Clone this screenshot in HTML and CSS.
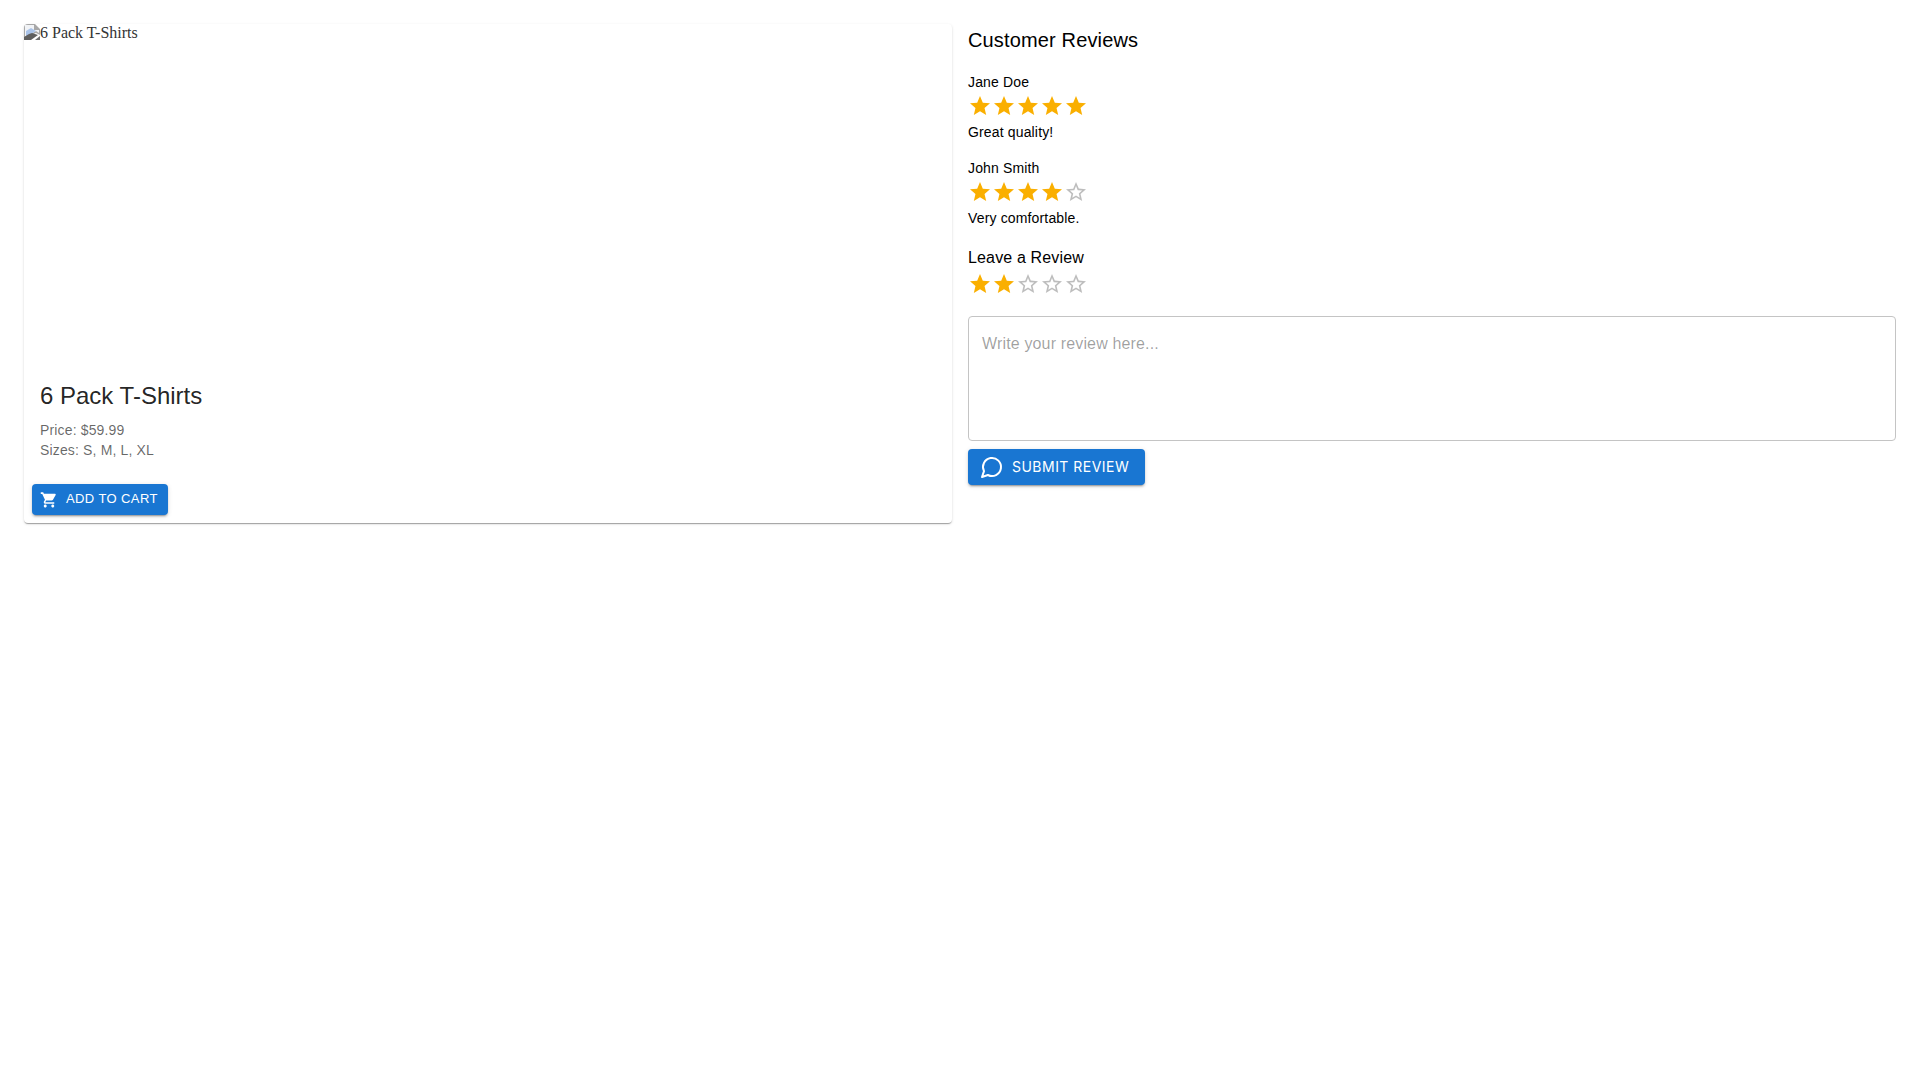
FILE: index.html
```html
<!DOCTYPE html>
<html lang="en">
<head>
<meta charset="utf-8">
<title>6 Pack T-Shirts</title>
<link rel="stylesheet" href="styles.css">
</head>
<body>
<svg class="defs" width="0" height="0" aria-hidden="true">
  <defs>
    <symbol id="star" viewBox="0 0 24 24"><path d="M12 17.27 18.18 21l-1.64-7.03L22 9.24l-7.19-.61L12 2 9.19 8.63 2 9.24l5.46 4.73L5.82 21z"/></symbol>
    <symbol id="star-o" viewBox="0 0 24 24"><path d="m22 9.24-7.19-.62L12 2 9.19 8.63 2 9.24l5.46 4.73L5.82 21 12 17.27 18.18 21l-1.63-7.03L22 9.24zM12 15.4l-3.76 2.27 1-4.28-3.32-2.88 4.38-.38L12 6.1l1.71 4.04 4.38.38-3.32 2.88 1 4.28L12 15.4z"/></symbol>
  </defs>
</svg>
<main class="page">
  <article class="card">
    <div class="media">
      <svg class="broken" viewBox="0 0 16 16" aria-hidden="true">
        <path d="M0 0h11l5 5v6l-4-2-5 2-7 3z" fill="#a8a8a8"/>
        <path d="M1 1h9v5h5v3l-3-2-5 3-6 3z" fill="#f1f3f6"/>
        <path d="M2 7l5-3 5 3-5 3-5 2z" fill="#aac4ea"/>
        <path d="M0 16v-3l5-3 3-1 6 2-7 5z" fill="#5f5f5f"/>
        <path d="M11 16l5-4v4z" fill="#707070"/>
      </svg><span class="alt">6 Pack T-Shirts</span>
    </div>
    <div class="content">
      <h2 class="title">6 Pack T-Shirts</h2>
      <p class="meta">Price: $59.99</p>
      <p class="meta">Sizes: S, M, L, XL</p>
    </div>
    <div class="actions">
      <button class="btn btn-small" type="button">
        <svg class="icon-cart" viewBox="0 0 24 24"><path d="M7 18c-1.100 0-1.990.9-1.990 2S5.900 22 7 22s2-.9 2-2-.9-2-2-2zM1 2v2h2l3.600 7.590-1.350 2.450c-.16.28-.25.61-.25.96 0 1.100.9 2 2 2h12v-2H7.420c-.14 0-.25-.11-.25-.25l.03-.12.9-1.830h7.450c.75 0 1.410-.41 1.750-1.030l3.580-6.490c.08-.14.12-.31.12-.48 0-.55-.45-1-1-1H5.210l-.94-2H1zm16 16c-1.100 0-1.990.9-1.990 2s.89 2 1.990 2 2-.9 2-2-.9-2-2-2z"/></svg>
        <span class="btn-label">Add to Cart</span>
      </button>
    </div>
  </article>

  <section class="reviews">
    <h2 class="reviews-title">Customer Reviews</h2>
    <div class="review">
      <p class="body">Jane Doe</p>
      <div class="rating">
        <svg class="star on"><use href="#star"/></svg><svg class="star on"><use href="#star"/></svg><svg class="star on"><use href="#star"/></svg><svg class="star on"><use href="#star"/></svg><svg class="star on"><use href="#star"/></svg>
      </div>
      <p class="body">Great quality!</p>
    </div>
    <div class="review">
      <p class="body">John Smith</p>
      <div class="rating">
        <svg class="star on"><use href="#star"/></svg><svg class="star on"><use href="#star"/></svg><svg class="star on"><use href="#star"/></svg><svg class="star on"><use href="#star"/></svg><svg class="star off"><use href="#star-o"/></svg>
      </div>
      <p class="body">Very comfortable.</p>
    </div>
    <h3 class="leave">Leave a Review</h3>
    <div class="rating rating-input">
      <svg class="star on"><use href="#star"/></svg><svg class="star on"><use href="#star"/></svg><svg class="star off"><use href="#star-o"/></svg><svg class="star off"><use href="#star-o"/></svg><svg class="star off"><use href="#star-o"/></svg>
    </div>
    <textarea class="field" placeholder="Write your review here..."></textarea>
    <button class="btn btn-medium" type="button">
      <svg class="icon-chat" viewBox="0 0 24 24"><path d="M7.900 20A9 9 0 1 0 4 16.100L2 22Z"/></svg>
      Submit Review
    </button>
  </section>
</main>
</body>
</html>
```

FILE: styles.css
```css
* { box-sizing: border-box; }
html, body { margin: 0; padding: 0; }
body { background: #fff; color: #000; font-family: "Liberation Sans", Arial, sans-serif; }
.defs { position: absolute; }

.page {
  display: grid;
  grid-template-columns: 928px 928px;
  column-gap: 16px;
  align-items: start;
  padding: 24px;
}

.card {
  background: #fff;
  border-radius: 4px;
  box-shadow: 0 2px 1px -1px rgba(0,0,0,.2), 0 1px 1px 0 rgba(0,0,0,.14), 0 1px 3px 0 rgba(0,0,0,.12);
  overflow: hidden;
}
.media {
  height: 340px;
  font: 16px/18px "Liberation Serif", "Times New Roman", serif;
  color: #333;
}
.broken { width: 16px; height: 16px; vertical-align: -2px; }
.content { padding: 16px; }
.title {
  margin: 0 0 8.4px;
  font-size: 24px;
  font-weight: 400;
  line-height: 32px;
  color: rgba(0,0,0,.87);
}
.meta {
  margin: 0;
  font-size: 14px;
  line-height: 20px;
  letter-spacing: .15px;
  color: rgba(0,0,0,.6);
}
.actions { display: flex; padding: 8px; }

.btn {
  display: inline-flex;
  align-items: center;
  border: 0;
  border-radius: 4px;
  background: #1976d2;
  color: #fff;
  text-transform: uppercase;
  box-shadow: 0 3px 1px -2px rgba(0,0,0,.2), 0 2px 2px 0 rgba(0,0,0,.14), 0 1px 5px 0 rgba(0,0,0,.12);
}
.btn-small {
  height: 31px;
  padding: 4px 10px;
  font: 400 13px/22px "Liberation Sans", Arial, sans-serif;
  letter-spacing: .4px;
}
.btn-label { margin-bottom: 2px; }
.icon-cart { width: 18px; height: 18px; margin: 0 8px 0 -2px; fill: #fff; }
.btn-medium {
  height: 36px;
  margin-top: 8px;
  padding: 6px 16px 6px 12px;
  font: 400 14px/24px Inter, "Liberation Sans", sans-serif;
  letter-spacing: .48px;
}
.icon-chat { width: 24px; height: 24px; margin-right: 8px; fill: none; stroke: #fff; stroke-width: 2; stroke-linecap: round; stroke-linejoin: round; }

.reviews { display: flex; flex-direction: column; align-items: flex-start; }
.reviews-title {
  margin: 0 0 16px;
  font-size: 20px;
  font-weight: 400;
  line-height: 32px;
  letter-spacing: .15px;
}
.review { margin-bottom: 16px; }
.body { margin: 0; font-size: 14px; line-height: 20px; letter-spacing: .15px; }
.rating { display: flex; height: 30px; align-items: flex-start; padding-top: 2px; }
.star { width: 24px; height: 24px; flex: none; }
.star.on { fill: #faaf00; }
.star.off { fill: rgba(0,0,0,.26); }
.leave {
  margin: 0;
  font-size: 16px;
  font-weight: 400;
  line-height: 28px;
  letter-spacing: .15px;
}
.rating-input { height: 24px; padding-top: 0; margin: 0 0 20px; }
.field {
  display: block;
  width: 100%;
  height: 125px;
  padding: 15px 13px;
  border: 1px solid #c4c4c4;
  border-radius: 4px;
  font: 16px/23px "Liberation Sans", Arial, sans-serif;
  letter-spacing: .15px;
  resize: none;
  outline: 0;
}
.field::placeholder { color: rgba(0,0,0,.38); opacity: 1; }
```
